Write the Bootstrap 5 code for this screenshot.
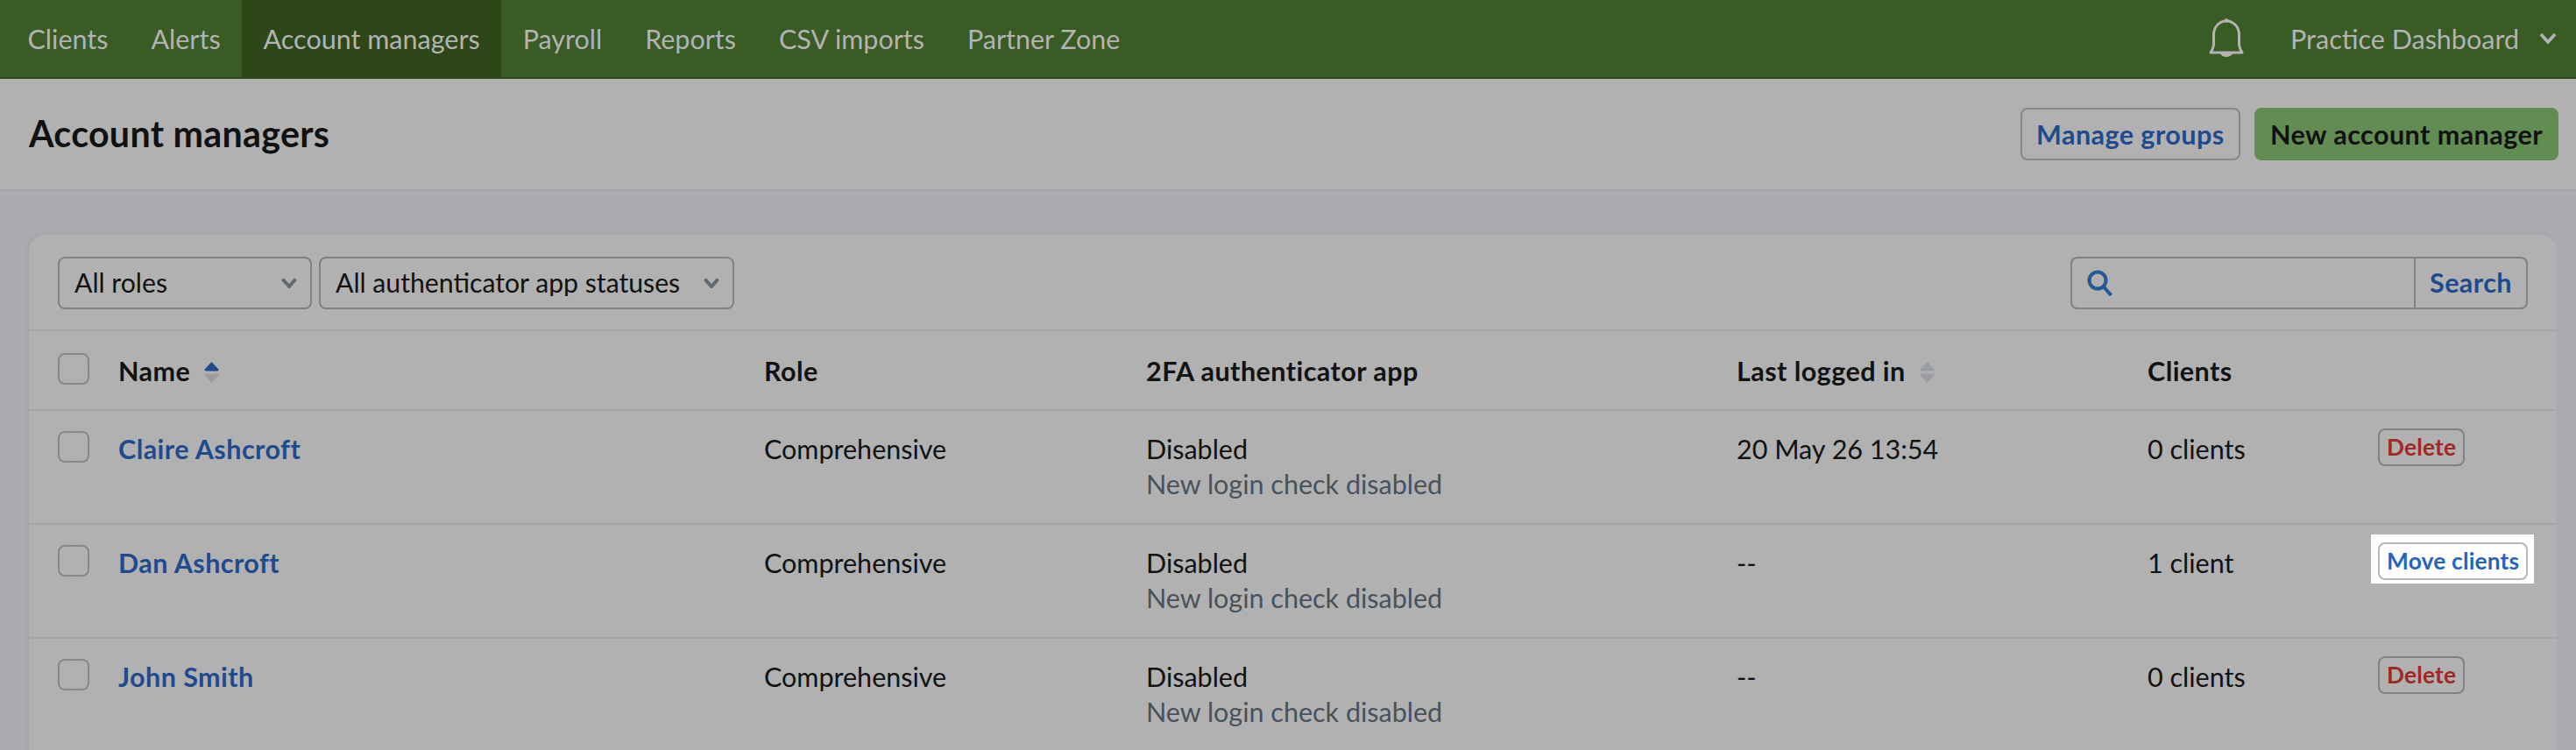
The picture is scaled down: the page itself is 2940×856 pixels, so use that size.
<!DOCTYPE html>
<html lang="en">
  <head>
    <meta charset="UTF-8" />
    <meta name="viewport" content="width=device-width, initial-scale=1.0" />
    <title>Account managers</title>
    <link href="https://cdn.jsdelivr.net/npm/bootstrap@5.3.0/dist/css/bootstrap.min.css" rel="stylesheet" />
    <style>
      html, body { height: 100%; overflow: hidden; }
      body { background: #a9abb0; font-family: "Lato", "Liberation Sans", sans-serif; font-size: 30.5px; line-height: 40px; color: #121212; }
      .app-nav { background: #395b24; height: 90px; padding: 0 0 0 7px; border-bottom: 2px solid #2c4a1c; align-items: stretch; }
      .app-nav .navbar-nav .nav-link { color: #b3b3b3; font-size: 30.5px; padding: 0 24.5px; height: 88px; display: flex; align-items: center; }
      .app-nav .navbar-nav .nav-link.active { background: #2d4719; color: #b3b3b3; }
      .nav-tools { padding-right: 22px; }
      .bell { width: 40px; height: 44px; margin-right: 53px; margin-top: -2px; }
      .dash-link { color: #b3b3b3; font-size: 30.5px; text-decoration: none; }
      .dash-caret { margin-left: 23px; }
      .page-head { background: #b1b1b1; height: 128px; border-bottom: 2px solid #a4a4a9; padding: 0 20px 0 33px; }
      .page-head h1 { font-size: 41.2px; font-weight: 700; letter-spacing: .3px; margin: 0; color: #111; }
      .btn-ghost, .btn-new { font-size: 30.5px; font-weight: 700; letter-spacing: .45px; height: 60px; padding: 0 16.5px; border-radius: 8px; line-height: 1; }
      .btn-ghost { background: transparent; border: 2px solid #85898c; color: #1f4b8e; }
      .btn-new { background: #618d52; border: 2px solid #618d52; color: #111; padding: 0 16px; }
      .list-card { background: #b1b1b1; border: 0; border-radius: 18px 18px 0 0; margin: 50px 22px 0 33px; box-shadow: -2px -1px 3px #a4a4a9; }
      .filter-bar { padding: 25px 33px 24px 33px; border-bottom: 2px solid #a4a4a9; height: 110px; }
      .form-select.filter { background-color: transparent; border: 2px solid #7c8387; border-radius: 8px; height: 60px; font-size: 30.2px; color: #121212; padding: 0 40px 0 17px; background-size: 18px 12px; background-position: right 15px center; line-height: 1; background-image: url("data:image/svg+xml,%3csvg xmlns='http://www.w3.org/2000/svg' viewBox='0 0 18 12'%3e%3cpath fill='none' stroke='%235f6b74' stroke-width='4' d='M1.5 1.5 9 10l7.5-8.5'/%3e%3c/svg%3e"); }
      .filter-role { width: 290px; }
      .filter-app { width: 474px; }
      .search-group { width: 522px; height: 60px; flex-wrap: nowrap; }
      .search-group .input-group-text, .search-group .form-control, .search-group .btn { background: transparent; border: 2px solid #7c8387; border-radius: 8px; font-size: 30.5px; }
      .search-group .input-group-text { border-right: 0; border-top-right-radius: 0; border-bottom-right-radius: 0; padding: 0 0 0 17px; }
      .search-group .form-control { border-left: 0; border-right: 0; border-radius: 0; box-shadow: none; }
      .search-group .btn { color: #1f4b8e; font-weight: 700; letter-spacing: .45px; border-top-left-radius: 0; border-bottom-left-radius: 0; padding: 0 16px; margin-left: 0 !important; }
      .acct-table { table-layout: fixed; width: 2885px; margin: 0; --bs-table-bg: transparent; --bs-table-color: #121212; font-size: 30.5px; }
      .acct-table > :not(caption) > * > * { border-bottom: 2px solid #a4a4a9; padding: 23px 16px 25px; box-shadow: none; vertical-align: top; line-height: 40px; }
      .acct-table thead th { font-weight: 700; letter-spacing: .45px; height: 90px; padding-top: 25px; padding-bottom: 23px; }
      .acct-table tbody tr { height: 130px; }
      .acct-table .cell-check { padding-left: 33px; padding-right: 0; }
      .acct-table .cell-check .form-check-input { width: 36px; height: 36px; margin: 0; background-color: transparent; border: 2px solid #85898c; border-radius: 8px; display: block; }
      .w-check { width: 86px; } .w-name { width: 737px; } .w-role { width: 436px; }
      .w-fa { width: 674px; } .w-last { width: 469px; } .w-clients { width: 263px; } .w-act { width: 220px; }
      .name-link { color: #1f4b8e; font-weight: 700; letter-spacing: .45px; text-decoration: none; }
      .note { color: #47525c; }
      .btn-row { font-size: 26.3px; font-weight: 700; letter-spacing: .2px; height: 43px; padding: 0 8px; line-height: 1; border-radius: 8px; margin-top: -3px; display: inline-flex; align-items: center; vertical-align: top; }
      .btn-delete { background: transparent; border: 2px solid #7c8387; color: #a02a22; }
      .spot { display: inline-block; vertical-align: top; background: #fff; padding: 9px 7px 4px 8px; margin: -12px 0 0 -8px; line-height: 0; }
      .btn-move { background: #fff; border: 2px solid #b3b7c0; color: #2563c0; margin-top: 0; }
      .sort { width: 17px; height: 24px; margin-left: 16px; vertical-align: -2px; }
    </style>
  </head>
  <body>
    <nav class="navbar navbar-expand app-nav">
      <ul class="navbar-nav">
        <li class="nav-item"><a class="nav-link" href="#">Clients</a></li>
        <li class="nav-item"><a class="nav-link" href="#">Alerts</a></li>
        <li class="nav-item"><a class="nav-link active" href="#">Account managers</a></li>
        <li class="nav-item"><a class="nav-link" href="#">Payroll</a></li>
        <li class="nav-item"><a class="nav-link" href="#">Reports</a></li>
        <li class="nav-item"><a class="nav-link" href="#">CSV imports</a></li>
        <li class="nav-item"><a class="nav-link" href="#">Partner Zone</a></li>
      </ul>
      <div class="ms-auto d-flex align-items-center nav-tools">
        <svg class="bell" viewBox="0 0 40 44">
          <path fill="none" stroke="#b3b3b3" stroke-width="3" stroke-linejoin="round" d="M20 2.500C11 4 5.500 10 5.500 19v10c0 3-1 6-3.500 10h36c-2.500-4-3.500-7-3.500-10V19C34.500 10 29 4 20 2.500Z" />
          <circle cx="20" cy="2.500" r="2.200" fill="#b3b3b3" />
          <path fill="#b3b3b3" d="M13 40h14c-1 2.500-4 4-7 4s-6-1.500-7-4Z" />
        </svg>
        <a class="dash-link" href="#">Practice Dashboard</a>
        <svg class="dash-caret" width="20" height="14" viewBox="0 0 20 14" fill="none" stroke="#b3b3b3" stroke-width="3.600"><path d="M2 2l8 9 8-9" /></svg>
      </div>
    </nav>

    <header class="page-head d-flex align-items-center justify-content-between">
      <h1>Account managers</h1>
      <div class="d-flex gap-3">
        <button class="btn btn-ghost" type="button">Manage groups</button>
        <button class="btn btn-new" type="button">New account manager</button>
      </div>
    </header>

    <main class="card list-card">
      <div class="filter-bar d-flex align-items-center justify-content-between">
        <div class="d-flex gap-2">
          <select class="form-select filter filter-role"><option>All roles</option></select>
          <select class="form-select filter filter-app"><option>All authenticator app statuses</option></select>
        </div>
        <div class="input-group search-group">
          <span class="input-group-text">
            <svg width="30" height="30" viewBox="0 0 30 30" fill="none" stroke="#235a96" stroke-width="4"><circle cx="12" cy="12" r="9.500" /><path d="M18.500 19l9 10" /></svg>
          </span>
          <input class="form-control" type="text" aria-label="Search" />
          <button class="btn" type="button">Search</button>
        </div>
      </div>
      <table class="table acct-table">
        <colgroup>
          <col class="w-check" /><col class="w-name" /><col class="w-role" /><col class="w-fa" /><col class="w-last" /><col class="w-clients" /><col class="w-act" />
        </colgroup>
        <thead>
          <tr>
            <th class="cell-check"><input class="form-check-input" type="checkbox" aria-label="Select all" /></th>
            <th>Name<svg class="sort" viewBox="0 0 17 24"><path fill="#1f4b8e" d="M8.500 0 16 8Q17.500 10.500 14.500 10.500H2.500Q-.5 10.500 1 8Z" /><path fill="#9a9ea2" d="M8.500 24 16 16Q17.500 13.500 14.500 13.500H2.500Q-.5 13.500 1 16Z" /></svg></th>
            <th>Role</th>
            <th>2FA authenticator app</th>
            <th>Last logged in<svg class="sort" viewBox="0 0 17 24"><path fill="#9a9ea2" d="M8.500 0 16 8Q17.500 10.500 14.500 10.500H2.500Q-.5 10.500 1 8Z" /><path fill="#9a9ea2" d="M8.500 24 16 16Q17.500 13.500 14.500 13.500H2.500Q-.5 13.500 1 16Z" /></svg></th>
            <th>Clients</th>
            <th></th>
          </tr>
        </thead>
        <tbody>
          <tr>
            <td class="cell-check"><input class="form-check-input" type="checkbox" aria-label="Select Claire Ashcroft" /></td>
            <td><a class="name-link" href="#">Claire Ashcroft</a></td>
            <td>Comprehensive</td>
            <td>Disabled<br /><span class="note">New login check disabled</span></td>
            <td>20 May 26 13:54</td>
            <td>0 clients</td>
            <td><button class="btn btn-row btn-delete" type="button">Delete</button></td>
          </tr>
          <tr>
            <td class="cell-check"><input class="form-check-input" type="checkbox" aria-label="Select Dan Ashcroft" /></td>
            <td><a class="name-link" href="#">Dan Ashcroft</a></td>
            <td>Comprehensive</td>
            <td>Disabled<br /><span class="note">New login check disabled</span></td>
            <td>--</td>
            <td>1 client</td>
            <td><span class="spot"><button class="btn btn-row btn-move" type="button">Move clients</button></span></td>
          </tr>
          <tr>
            <td class="cell-check"><input class="form-check-input" type="checkbox" aria-label="Select John Smith" /></td>
            <td><a class="name-link" href="#">John Smith</a></td>
            <td>Comprehensive</td>
            <td>Disabled<br /><span class="note">New login check disabled</span></td>
            <td>--</td>
            <td>0 clients</td>
            <td><button class="btn btn-row btn-delete" type="button">Delete</button></td>
          </tr>
        </tbody>
      </table>
    </main>

    <script src="https://cdn.jsdelivr.net/npm/bootstrap@5.3.0/dist/js/bootstrap.bundle.min.js"></script>
  </body>
</html>
